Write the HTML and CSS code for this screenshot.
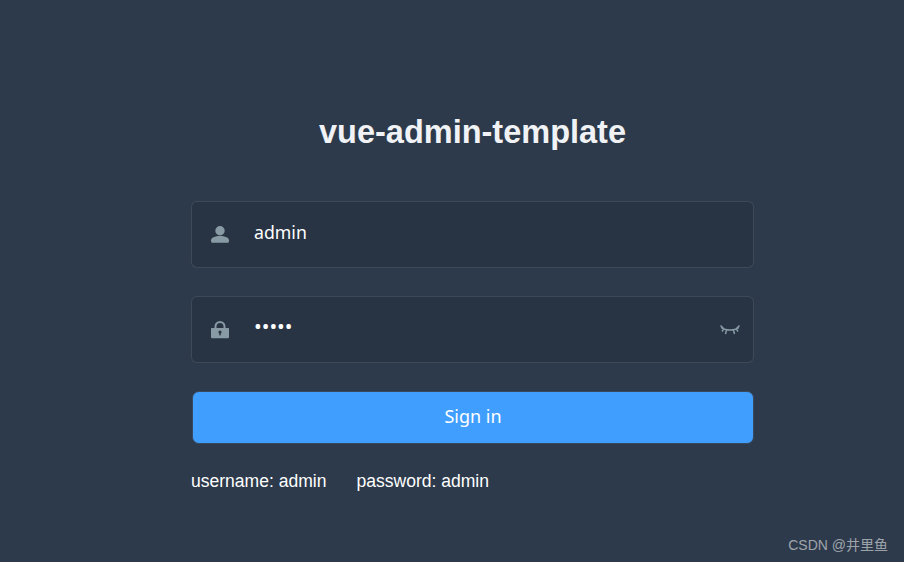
FILE: index.html
```html
<!DOCTYPE html>
<html lang="en">
<head>
<meta charset="utf-8">
<title>vue-admin-template</title>
<link rel="stylesheet" href="styles.css">
</head>
<body>
<main class="login">
  <form class="form">
    <h1 class="title">vue-admin-template</h1>
    <div class="field">
      <span class="icon">
        <svg width="18" height="18" viewBox="0 0 18 18"><circle cx="9" cy="4.700" r="4.700" fill="#889aa4"/><path d="M0 14.500C0 11.500 4 10 9 10s9 1.500 9 4.500c0 1.500-.5 2.300-1.500 2.300h-15C.5 16.800 0 16 0 14.500z" fill="#889aa4"/></svg>
      </span>
      <span class="value">admin</span>
    </div>
    <div class="field">
      <span class="icon icon-lock">
        <svg width="18" height="18" viewBox="0 0 18 18"><path d="M4.500 8V5.500a4.500 4.500 0 0 1 9 0V8" fill="none" stroke="#889aa4" stroke-width="2"/><path d="M1 7h16c.6 0 1 .4 1 1v8c0 .8-.6 1.300-1.300 1.300H1.300C.6 17.300 0 16.800 0 16V8c0-.6.400-1 1-1z" fill="#889aa4"/><circle cx="9" cy="11" r="1.600" fill="#283443"/><rect x="8.300" y="11" width="1.400" height="3.400" fill="#283443"/></svg>
      </span>
      <span class="value dots">•••••</span>
      <span class="eye">
        <svg width="20" height="12" viewBox="0 0 20 12"><path d="M1 2C4 6 16 6 19 2M0.500 .5l3 3M19.500 .5l-3 3M6.500 5l-1 4M13.500 5l1 4M4 3.500l-2 3M16 3.500l2 3" fill="none" stroke="#889aa4" stroke-width="1.500"/></svg>
      </span>
    </div>
    <button class="submit" type="button">Sign in</button>
    <p class="tips"><span class="tip">username: admin</span><span>password: admin</span></p>
  </form>
</main>
<div class="watermark">CSDN @井里鱼</div>
</body>
</html>
```

FILE: styles.css
```css
* {
  box-sizing: border-box;
}

html,
body {
  margin: 0;
  height: 100%;
}

body {
  background: #2d3a4b;
  overflow: hidden;
}

.login {
  height: 562px;
  padding-left: 191px;
}

.form {
  width: 563px;
  padding-top: 112px;
}

.title {
  margin: 0 0 48px;
  height: 41px;
  font: 700 32.500px/41px "Liberation Sans", Arial, sans-serif;
  color: #f0f2f5;
  text-align: center;
}

.field {
  display: flex;
  align-items: center;
  height: 67px;
  margin-bottom: 28px;
  border: 1px solid rgba(255, 255, 255, 0.1);
  border-radius: 6px;
  background: rgba(0, 0, 0, 0.1);
}

.icon {
  display: flex;
  width: 18px;
  margin-left: 19px;
}

.value {
  margin-left: 25px;
  margin-top: -6px;
  font: 17.700px/24px "Noto Sans", "Open Sans", sans-serif;
  color: #fff;
}

.dots {
  margin-top: -8px;
  font-size: 20.500px;
}

.eye {
  display: flex;
  margin-left: auto;
  margin-right: 13px;
  margin-top: 3px;
}

.submit {
  display: block;
  width: 562px;
  height: 53px;
  margin: 0 0 25px 1px;
  padding: 0 0 4px;
  border: 1px solid #3a4a5e;
  border-radius: 7px;
  background: #409eff;
  font: 18px/24px "Noto Sans", "Open Sans", sans-serif;
  color: #fff;
}

.tips {
  margin: 0;
  font: 17.550px/24px "Liberation Sans", Arial, sans-serif;
  color: #fff;
}

.tip {
  margin-right: 30px;
}

.watermark {
  position: absolute;
  right: 16px;
  bottom: 7px;
  font: 14px/20px "Liberation Sans", "Noto Sans CJK SC", sans-serif;
  color: rgba(255, 255, 255, 0.55);
}
```
